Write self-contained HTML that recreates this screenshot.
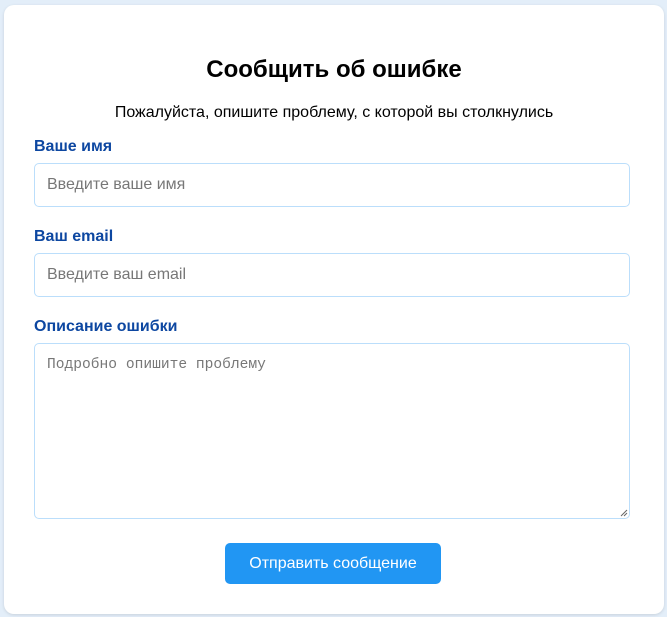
<!DOCTYPE html>
<html><head><meta charset="utf-8"><style>
html,body{margin:0;padding:0;}
body{width:667px;height:617px;background:#e3eef9;font-family:"Liberation Sans","Noto Sans CJK SC",sans-serif;position:relative;overflow:hidden;}
.card{position:absolute;left:4px;top:5px;width:660px;height:609px;background:#fff;border-radius:10px;box-shadow:0 1px 3px rgba(0,0,0,0.12);}
.abs{position:absolute;}
h1{position:absolute;left:0;width:660px;top:51px;margin:0;text-align:center;font-size:24px;font-weight:bold;color:#000;}
.sub{left:0;width:660px;top:99px;text-align:center;font-size:16px;color:#000;}
.lbl{left:30px;font-size:16px;font-weight:bold;color:#0d47a1;}
.inp{left:30px;width:596px;border:1px solid #bbdefb;border-radius:5px;box-sizing:border-box;}
.ph{position:absolute;left:12px;color:#777;font-size:16px;}
.btn{left:221px;top:538px;width:216px;height:41px;background:#2196f3;border-radius:5px;color:#fff;font-size:16px;text-align:center;line-height:41px;}
</style></head><body>
<div class="card">
<h1>Сообщить об ошибке</h1>
<div class="abs sub">Пожалуйста, опишите проблему, с которой вы столкнулись</div>
<div class="abs lbl" style="top:133px">Ваше имя</div>
<div class="abs inp" style="top:158px;height:44px"><span class="ph" style="top:12px">Введите ваше имя</span></div>
<div class="abs lbl" style="top:223px">Ваш email</div>
<div class="abs inp" style="top:248px;height:44px"><span class="ph" style="top:12px">Введите ваш email</span></div>
<div class="abs lbl" style="top:313px">Описание ошибки</div>
<div class="abs inp" style="top:338px;height:176px"><span class="ph" style="top:13px;font-family:'Liberation Mono',monospace;font-size:14.6px">Подробно опишите проблему</span>
<svg class="abs" style="right:1px;bottom:1px" width="9" height="9"><path d="M8 2L2 8M8 5L5 8" stroke="#666" stroke-width="1"/></svg></div>
<div class="abs btn">Отправить сообщение</div>
</div>
</body></html>
